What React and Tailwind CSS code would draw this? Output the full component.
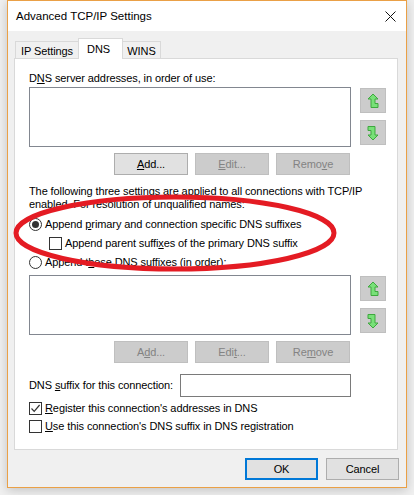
import React from 'react';

const UpArrow = () => (
  <svg width="12" height="16" viewBox="0 0 12 16">
    <path d="M6 1 L11 6 L8 6 L8 10.5 L11 10.5 L11 14.5 L4 14.5 L4 6 L1 6 Z" fill="#78e078" stroke="#3ea83e" strokeWidth="1" strokeLinejoin="miter" />
  </svg>
);

const DownArrow = () => (
  <svg width="12" height="16" viewBox="0 0 12 16" style={{ transform: 'rotate(180deg)' }}>
    <path d="M6 1 L11 6 L8 6 L8 10.5 L11 10.5 L11 14.5 L4 14.5 L4 6 L1 6 Z" fill="#78e078" stroke="#3ea83e" strokeWidth="1" strokeLinejoin="miter" />
  </svg>
);

const Btn = ({ children, disabled }) => (
  <div
    className={`w-[74px] h-[22px] flex items-center justify-center border ${
      disabled ? 'bg-[#cccccc] border-[#bfbfbf] text-[#838383]' : 'bg-[#e1e1e1] border-[#adadad] text-black'
    }`}
  >
    {children}
  </div>
);

const Radio = ({ checked }) => (
  <div className="w-[13px] h-[13px] rounded-full border border-[#333333] bg-white flex items-center justify-center shrink-0">
    {checked && <div className="w-[7px] h-[7px] rounded-full bg-[#333333]" />}
  </div>
);

const Check = ({ checked }) => (
  <div className="w-[13px] h-[13px] border border-[#333333] bg-white flex items-center justify-center shrink-0">
    {checked && (
      <svg width="11" height="11" viewBox="0 0 11 11">
        <path d="M1.5 5.5 L4.2 8.3 L9.6 2" fill="none" stroke="#333333" strokeWidth="1.2" />
      </svg>
    )}
  </div>
);

const ListWithArrows = () => (
  <div className="flex">
    <div className="w-[322px] h-[60px] border border-[#828790] bg-white" />
    <div className="ml-[9px] mt-[1px] flex flex-col gap-[7px]">
      <div className="w-[26px] h-[25px] bg-[#cccccc] border border-[#bfbfbf] flex items-center justify-center">
        <UpArrow />
      </div>
      <div className="w-[26px] h-[25px] bg-[#cccccc] border border-[#bfbfbf] flex items-center justify-center">
        <DownArrow />
      </div>
    </div>
  </div>
);

export default function App() {
  return (
    <div className="relative w-[414px] h-[495px] overflow-hidden bg-[#f0f0f0] font-['Segoe_UI','Liberation_Sans',Arial,sans-serif] text-[11px] tracking-[-0.1px] text-black">
      <div className="ml-[7px] w-[400px] h-[488px] border border-[#eaa046] bg-[#f0f0f0] flex flex-col shadow-[0_2px_10px_rgba(0,0,0,0.2)]">
        {/* Title bar */}
        <div className="h-[30px] bg-white flex items-center justify-between pl-[8px] pr-[10px]">
          <span className="text-[11.5px] tracking-normal leading-none mt-[2px]">Advanced TCP/IP Settings</span>
          <svg width="11" height="11" viewBox="0 0 11 11" className="mt-[1px]">
            <path d="M0.5 0.5 L10.5 10.5 M10.5 0.5 L0.5 10.5" stroke="#111" strokeWidth="1" />
          </svg>
        </div>

        <div className="flex-1 flex flex-col pl-[6px] pr-[8px] pt-[7px]">
          {/* Tabs */}
          <div className="flex items-end h-[20px] pl-[1px]">
            <div className="w-[64px] h-[17px] border border-b-0 border-[#d9d9d9] bg-[#f0f0f0] flex items-center justify-center pt-[2px]">
              IP Settings
            </div>
            <div className="relative z-10 -ml-px w-[45px] h-[21px] -mb-px border border-b-0 border-[#d9d9d9] bg-white flex justify-center pt-[2px] pr-[4px]">
              DNS
            </div>
            <div className="-ml-px w-[39px] h-[17px] border border-b-0 border-[#d9d9d9] bg-[#f0f0f0] flex items-center justify-center pt-[2px]">
              WINS
            </div>
          </div>

          {/* Panel */}
          <div className="h-[392px] border border-[#d9d9d9] bg-white pl-[14px] flex flex-col">
            <div className="mt-[12px] leading-[14px]">
              D<u>N</u>S server addresses, in order of use:
            </div>
            <div className="mt-[2px]">
              <ListWithArrows />
            </div>
            <div className="mt-[6px] ml-[85px] flex gap-[7px]">
              <Btn><u>A</u>dd...</Btn>
              <Btn disabled><u>E</u>dit...</Btn>
              <Btn disabled>Remo<u>v</u>e</Btn>
            </div>

            <p className="mt-[10px] leading-[13px]">
              The following three settings are applied to all connections with TCP/IP
              <br />
              enabled. For resolution of unqualified names:
            </p>

            <div className="mt-[6px] h-[14px] flex items-center gap-[3px]">
              <Radio checked />
              <span>Append <u>p</u>rimary and connection specific DNS suffixes</span>
            </div>
            <div className="mt-[5px] ml-[20px] h-[14px] flex items-center gap-[3px]">
              <Check />
              <span>Append parent suffi<u>x</u>es of the primary DNS suffix</span>
            </div>
            <div className="mt-[5px] h-[14px] flex items-center gap-[3px]">
              <Radio />
              <span>Append t<u>h</u>ese DNS suffixes (in order):</span>
            </div>

            <div className="mt-[6px]">
              <ListWithArrows />
            </div>
            <div className="mt-[6px] ml-[85px] flex gap-[7px]">
              <Btn disabled>A<u>d</u>d...</Btn>
              <Btn disabled>Edi<u>t</u>...</Btn>
              <Btn disabled>Re<u>m</u>ove</Btn>
            </div>

            <div className="mt-[11px] flex items-center">
              <span className="w-[151px]">DNS <u>s</u>uffix for this connection:</span>
              <div className="w-[171px] h-[23px] border border-[#7a7a7a] bg-white" />
            </div>

            <div className="mt-[4px] h-[14px] flex items-center gap-[3px]">
              <Check checked />
              <span><u>R</u>egister this connection's addresses in DNS</span>
            </div>
            <div className="mt-[4px] h-[14px] flex items-center gap-[3px]">
              <Check />
              <span><u>U</u>se this connection's DNS suffix in DNS registration</span>
            </div>
          </div>

          {/* Footer */}
          <div className="mt-[8px] flex justify-end gap-[8px]">
            <div className="w-[73px] h-[22px] border-2 border-[#0078d7] bg-[#e1e1e1] flex items-center justify-center">
              OK
            </div>
            <div className="-mr-px w-[73px] h-[22px] border border-[#adadad] bg-[#e1e1e1] flex items-center justify-center">
              Cancel
            </div>
          </div>
        </div>
      </div>

      {/* red hand-drawn annotation */}
      <svg className="absolute inset-0 pointer-events-none" width="414" height="495" viewBox="0 0 414 495">
        <ellipse cx="175" cy="233" rx="159" ry="36" fill="none" stroke="#e41b23" strokeWidth="5" />
      </svg>
    </div>
  );
}
